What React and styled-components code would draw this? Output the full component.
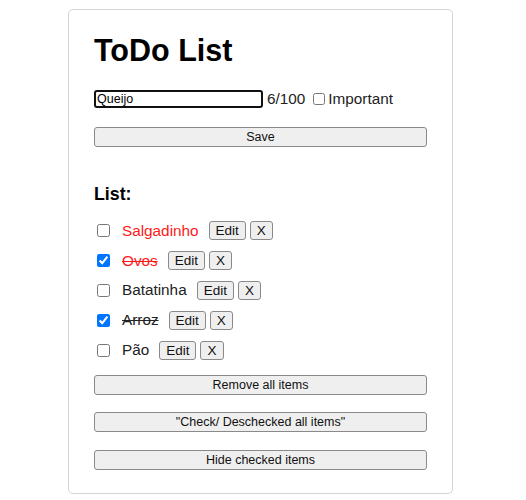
import React from "react";
import styled, { createGlobalStyle } from "styled-components";

const Global = createGlobalStyle`
  html, body { margin: 0; padding: 0; background: #fff; }
  body { font-family: "Liberation Sans", Arial, sans-serif; color: #111; }
`;

const Card = styled.div`
  box-sizing: border-box;
  width: 385px;
  margin: 9px 0 0 68px;
  padding: 22px 25px 23px 25px;
  border: 1px solid #d4d4d4;
  border-radius: 5px;
  display: flex;
  flex-direction: column;
`;

const Title = styled.h1`
  margin: 0;
  font-size: 30.5px;
  line-height: 36px;
  font-weight: 700;
  color: #000;
`;

const InputRow = styled.div`
  margin-top: 22px;
  display: flex;
  align-items: center;
  height: 18px;
  font-size: 15.3px;
  color: #222;
`;

const TextInput = styled.input`
  box-sizing: border-box;
  width: 169px;
  height: 18px;
  border: 2px solid #111;
  border-radius: 3px;
  padding: 0 1px;
  font-family: "Liberation Sans", Arial, sans-serif;
  font-size: 12.5px;
  color: #000;
  outline: none;
`;

const Counter = styled.span`
  margin-left: 4px;
`;

const CheckLabel = styled.label`
  display: flex;
  align-items: center;
  margin-left: 8px;
`;

const SmallCheck = styled.input`
  margin: 0 3px 0 0;
  width: 12px;
  height: 12px;
`;

const WideButton = styled.button`
  box-sizing: border-box;
  width: 100%;
  height: 20px;
  margin-top: ${(p) => p.$mt}px;
  padding: 0 6px;
  background: #efefef;
  border: 1px solid #8a8a8a;
  border-radius: 3px;
  font-family: "Liberation Sans", Arial, sans-serif;
  font-size: 12.5px;
  color: #111;
`;

const ListTitle = styled.h3`
  margin: 36px 0 0 0;
  font-size: 17.8px;
  line-height: 22px;
  font-weight: 700;
  color: #000;
`;

const List = styled.ul`
  list-style: none;
  margin: 11px 0 0 0;
  padding: 0;
  display: flex;
  flex-direction: column;
`;

const Item = styled.li`
  height: 29.8px;
  display: flex;
  align-items: center;
  font-size: 15.3px;
`;

const ItemCheck = styled.input`
  margin: 0 0 0 3px;
  width: 13px;
  height: 13px;
  accent-color: #0075ff;
`;

const ItemText = styled.span`
  margin-left: 12px;
  color: ${(p) => (p.$important ? "#ff1a1a" : "#222")};
  text-decoration: ${(p) => (p.$done ? "line-through" : "none")};
`;

const SmallButton = styled.button`
  box-sizing: border-box;
  height: 19px;
  margin-left: ${(p) => p.$ml}px;
  padding: 0 6px;
  background: #efefef;
  border: 1px solid #8a8a8a;
  border-radius: 3px;
  font-family: "Liberation Sans", Arial, sans-serif;
  font-size: 13.5px;
  line-height: 17px;
  color: #111;
`;

const items = [
  { text: "Salgadinho", important: true, done: false },
  { text: "Ovos", important: true, done: true },
  { text: "Batatinha", important: false, done: false },
  { text: "Arroz", important: false, done: true },
  { text: "Pão", important: false, done: false },
];

export default function App() {
  return (
    <>
      <Global />
      <Card>
        <Title>ToDo List</Title>
        <InputRow>
          <TextInput defaultValue="Queijo" />
          <Counter>6/100</Counter>
          <CheckLabel>
            <SmallCheck type="checkbox" />
            Important
          </CheckLabel>
        </InputRow>
        <WideButton $mt={19}>Save</WideButton>
        <ListTitle>List:</ListTitle>
        <List>
          {items.map((it) => (
            <Item key={it.text}>
              <ItemCheck type="checkbox" defaultChecked={it.done} />
              <ItemText $important={it.important} $done={it.done}>
                {it.text}
              </ItemText>
              <SmallButton $ml={10}>Edit</SmallButton>
              <SmallButton $ml={4}>X</SmallButton>
            </Item>
          ))}
        </List>
        <WideButton $mt={10}>Remove all items</WideButton>
        <WideButton $mt={17}>"Check/ Deschecked all items"</WideButton>
        <WideButton $mt={18}>Hide checked items</WideButton>
      </Card>
    </>
  );
}
